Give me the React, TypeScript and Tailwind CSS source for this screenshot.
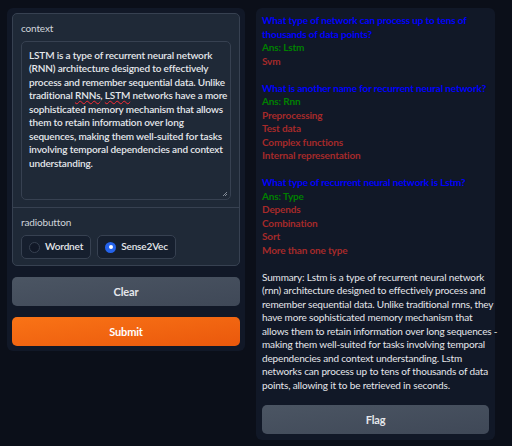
const contextLines = [
  <>LSTM is a type of recurrent neural network</>,
  <>(RNN) architecture designed to effectively</>,
  <>process and remember sequential data. Unlike</>,
  <>
    traditional <span className="underline decoration-wavy decoration-red-500">RNNs</span>,{" "}
    <span className="underline decoration-wavy decoration-red-500">LSTM</span> networks have a more
  </>,
  <>sophisticated memory mechanism that allows</>,
  <>them to retain information over long</>,
  <>sequences, making them well-suited for tasks</>,
  <>involving temporal dependencies and context</>,
  <>understanding.</>,
];

type Line = { text: string; kind: "q" | "a" | "d" | "s" | "gap" };

const output: Line[] = [
  { text: "What type of network can process up to tens of", kind: "q" },
  { text: "thousands of data points?", kind: "q" },
  { text: "Ans: Lstm", kind: "a" },
  { text: "Svm", kind: "d" },
  { text: "", kind: "gap" },
  { text: "What is another name for recurrent neural network?", kind: "q" },
  { text: "Ans: Rnn", kind: "a" },
  { text: "Preprocessing", kind: "d" },
  { text: "Test data", kind: "d" },
  { text: "Complex functions", kind: "d" },
  { text: "Internal representation", kind: "d" },
  { text: "", kind: "gap" },
  { text: "What type of recurrent neural network is Lstm?", kind: "q" },
  { text: "Ans: Type", kind: "a" },
  { text: "Depends", kind: "d" },
  { text: "Combination", kind: "d" },
  { text: "Sort", kind: "d" },
  { text: "More than one type", kind: "d" },
  { text: "", kind: "gap" },
  { text: "Summary: Lstm is a type of recurrent neural network", kind: "s" },
  { text: "(rnn) architecture designed to effectively process and", kind: "s" },
  { text: "remember sequential data. Unlike traditional rnns, they", kind: "s" },
  { text: "have more sophisticated memory mechanism that", kind: "s" },
  { text: "allows them to retain information over long sequences -", kind: "s" },
  { text: "making them well-suited for tasks involving temporal", kind: "s" },
  { text: "dependencies and context understanding. Lstm", kind: "s" },
  { text: "networks can process up to tens of thousands of data", kind: "s" },
  { text: "points, allowing it to be retrieved in seconds.", kind: "s" },
];

const tone = {
  q: "font-bold text-[#0000ff]",
  a: "font-bold text-[#008000]",
  d: "font-bold text-[#a52a2a]",
  s: "text-[#e5e7eb]",
  gap: "",
};

export default function App() {
  return (
    <div className="flex h-[446px] w-[512px] items-start gap-[11px] bg-[#0b0f19] pl-[7px] pt-[8px] font-['Lato',sans-serif] text-[10px] leading-[13.5px] tracking-[-0.15px]">
      <div className="flex w-[238px] flex-col gap-[11px] rounded-[6px] bg-[#111827] p-[5px]">
        <div className="flex flex-col rounded-[5px] border border-[#374151] bg-[#1f2937]">
          <div className="flex flex-col gap-[5px] px-[8px] pt-[8px] pb-[7px]">
            <p className="text-[#d1d5db]">context</p>
            <div className="relative h-[159px] rounded-[5px] border border-[#374151] bg-[#1f2937] px-[7px] pt-[7px] font-semibold text-[#e5e7eb]">
              {contextLines.map((l, i) => (
                <div key={i} className="whitespace-nowrap">
                  {l}
                </div>
              ))}
              <svg className="absolute right-[2px] bottom-[2px]" width="6" height="6" viewBox="0 0 6 6">
                <path d="M1 5 5 1M3 5 5 3" stroke="#9ca3af" strokeWidth="0.8" />
              </svg>
            </div>
          </div>
          <div className="flex flex-col gap-[6px] border-t border-[#374151] px-[8px] pt-[8px] pb-[6px]">
            <p className="text-[#d1d5db]">radiobutton</p>
            <div className="flex gap-[6px]">
              <label className="flex h-[24px] items-center gap-[5px] rounded-[5px] border border-[#374151] bg-[#161f2e] px-[7px] font-semibold text-[#e5e7eb]">
                <span className="h-[11px] w-[11px] rounded-full border border-[#374151] bg-[#111827]" />
                Wordnet
              </label>
              <label className="flex h-[24px] items-center gap-[5px] rounded-[5px] border border-[#374151] bg-[#161f2e] px-[7px] font-semibold text-[#e5e7eb]">
                <span className="flex h-[11px] w-[11px] items-center justify-center rounded-full bg-[#2563eb]">
                  <span className="h-[4px] w-[4px] rounded-full bg-white" />
                </span>
                Sense2Vec
              </label>
            </div>
          </div>
        </div>
        <button className="h-[29px] rounded-[5px] bg-gradient-to-br from-[#4b5563] to-[#3f4857] text-[11px] font-bold text-[#e5e7eb]">
          Clear
        </button>
        <button className="h-[29px] rounded-[5px] bg-gradient-to-br from-[#f97316] to-[#ea580c] text-[11px] font-bold text-white">
          Submit
        </button>
      </div>

      <div className="flex h-[432px] w-[239px] flex-col justify-between rounded-[6px] bg-[#111827] px-[6px] pt-[6px] pb-[6px]">
        <div>
          {output.map((l, i) =>
            l.kind === "gap" ? (
              <div key={i} className="h-[13.5px]" />
            ) : (
              <div key={i} className={`whitespace-nowrap ${tone[l.kind]}`}>
                {l.text}
              </div>
            )
          )}
        </div>
        <button className="h-[29px] rounded-[5px] bg-gradient-to-br from-[#4b5563] to-[#3f4857] text-[11px] font-bold text-[#e5e7eb]">
          Flag
        </button>
      </div>
    </div>
  );
}
